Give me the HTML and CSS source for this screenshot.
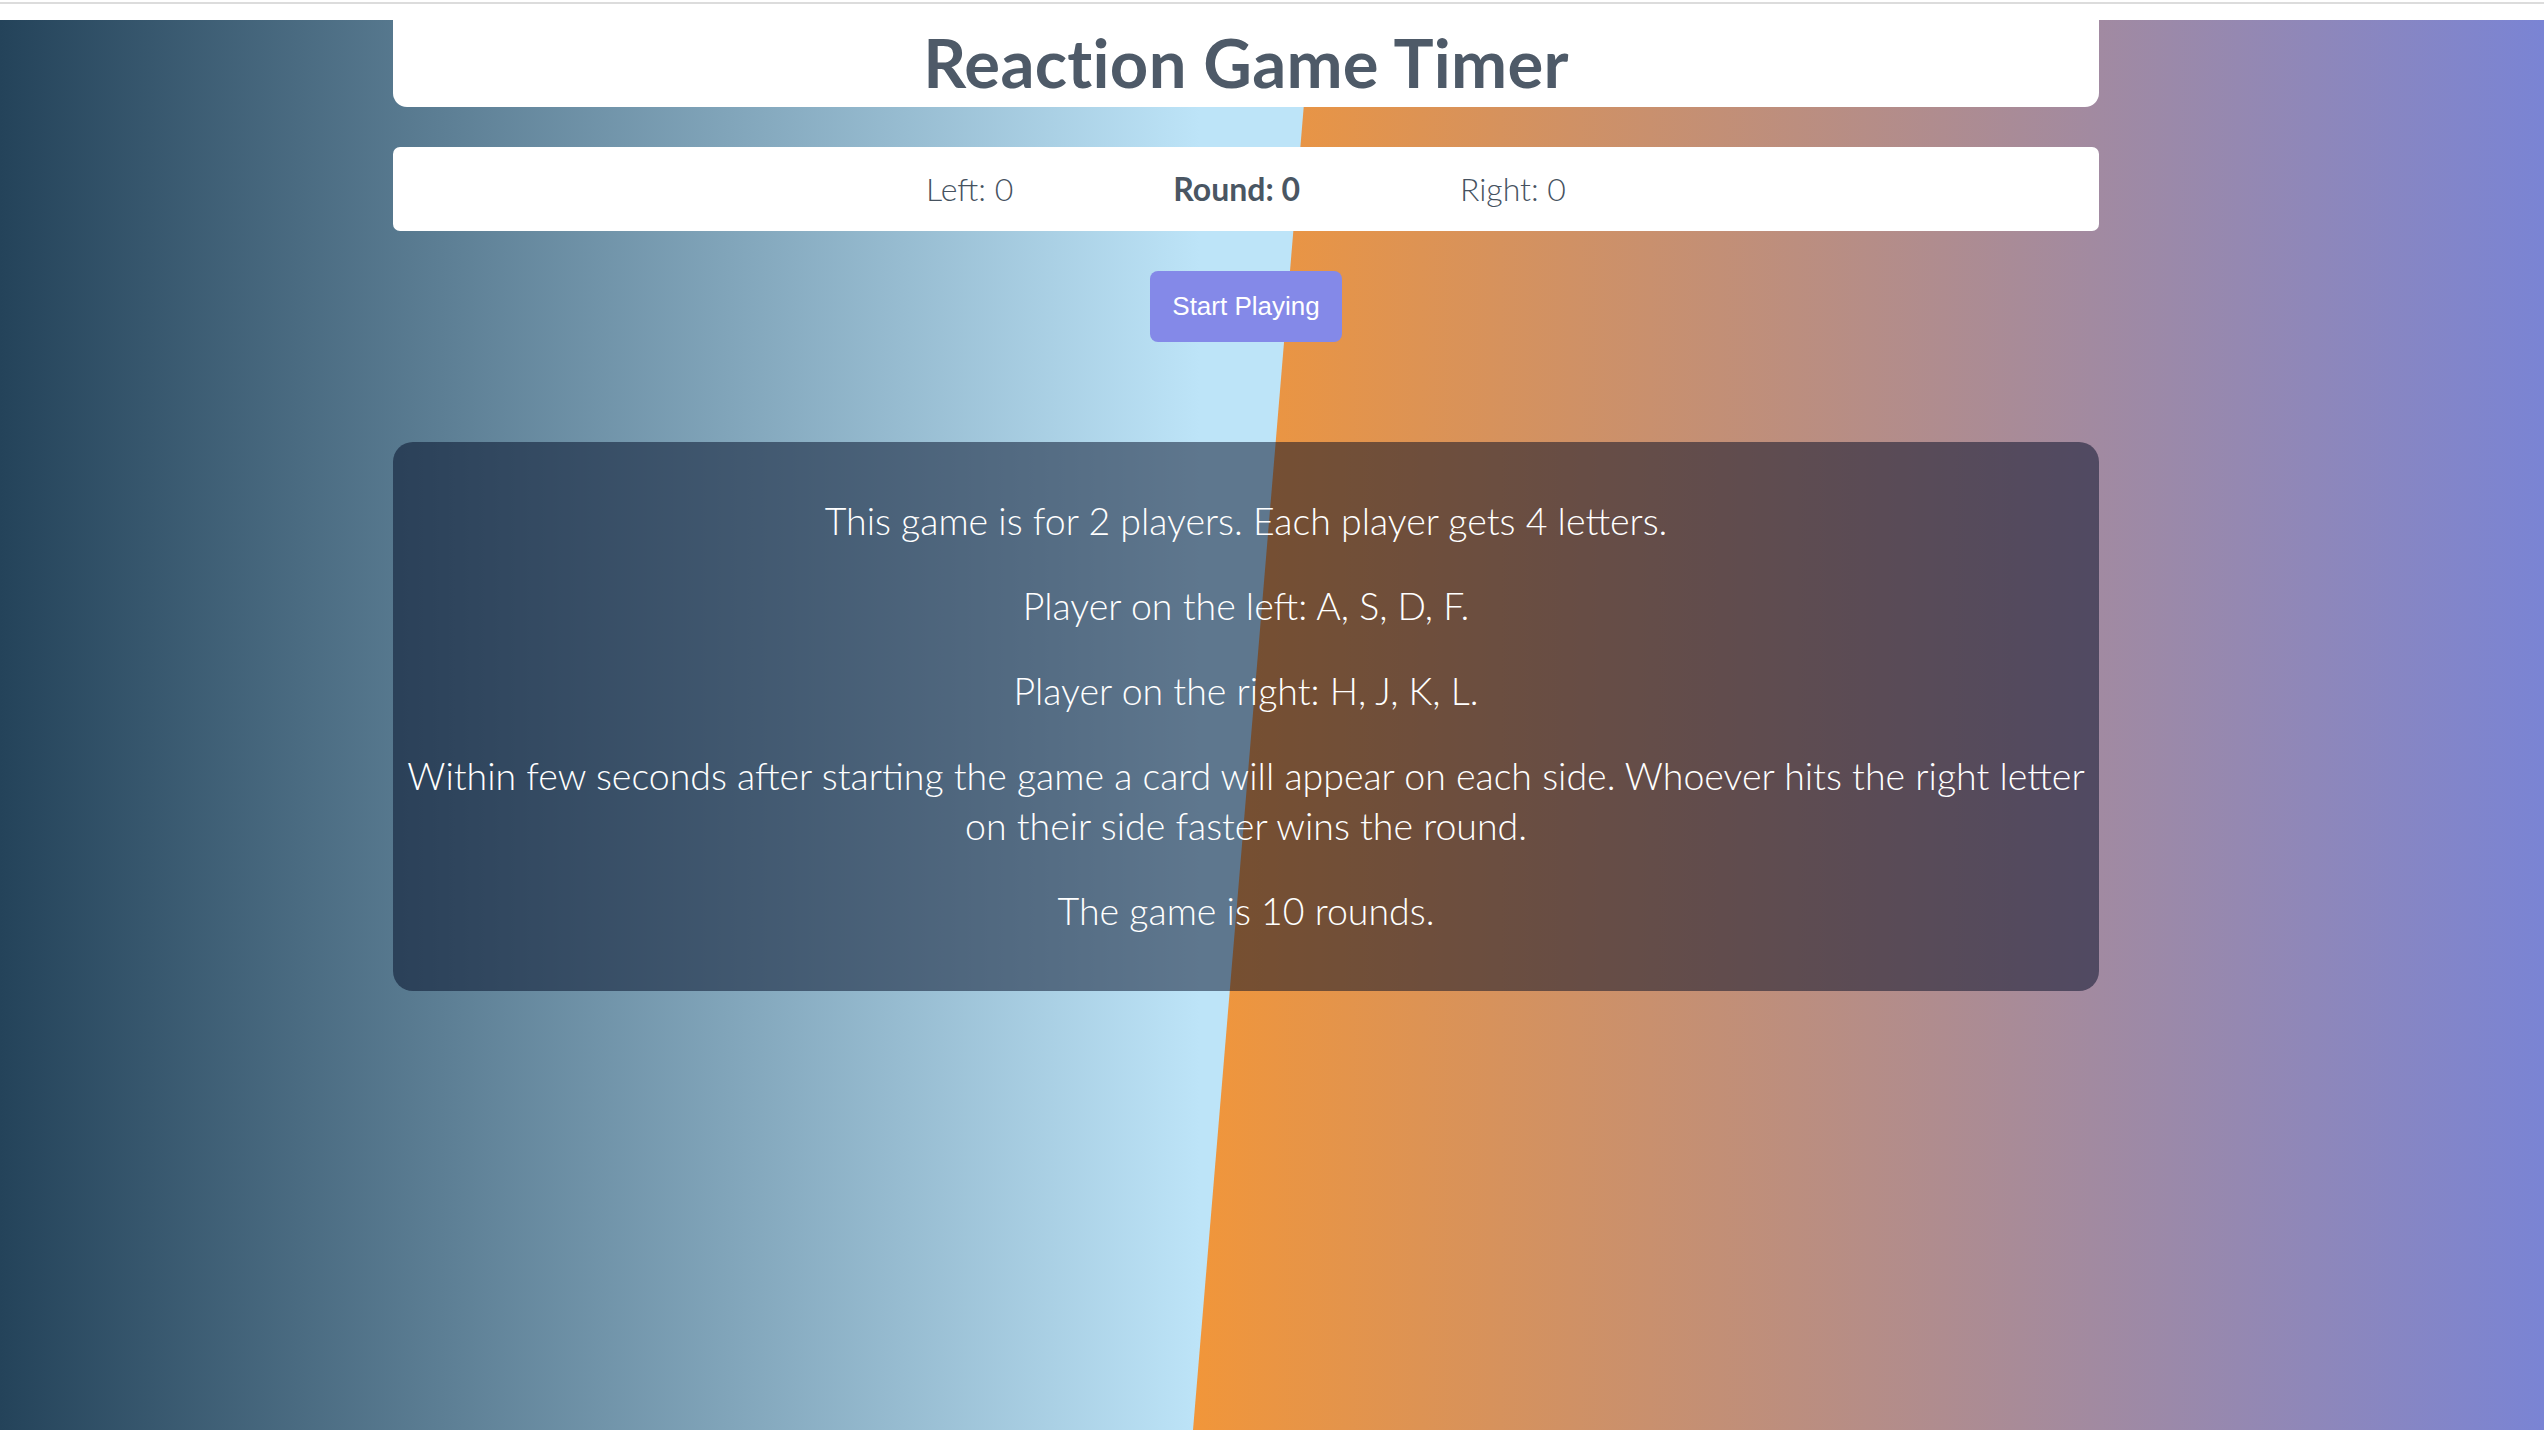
FILE: index.html
```html
<!DOCTYPE html>
<html lang="en">
<head>
<meta charset="utf-8">
<title>Reaction Game Timer</title>
<link rel="stylesheet" href="styles.css">
</head>
<body>
  <div class="topbar"></div>
  <main class="stage">
    <div class="container">
      <header class="title-card">
        <h1 class="title">Reaction Game Timer</h1>
      </header>
      <div class="scoreboard">
        <span class="score">Left: 0</span>
        <span class="score round">Round: 0</span>
        <span class="score">Right: 0</span>
      </div>
      <div class="actions">
        <button class="start-btn" type="button">Start Playing</button>
      </div>
      <section class="rules">
        <p>This game is for 2 players. Each player gets 4 letters.</p>
        <p>Player on the left: A, S, D, F.</p>
        <p>Player on the right: H, J, K, L.</p>
        <p>Within few seconds after starting the game a card will appear on each side. Whoever hits the right letter on their side faster wins the round.</p>
        <p>The game is 10 rounds.</p>
      </section>
    </div>
  </main>
</body>
</html>
```

FILE: styles.css
```css
html, body {
  margin: 0;
  padding: 0;
}

body {
  background: #ffffff;
  font-family: "Lato", "Noto Sans", sans-serif;
  overflow: hidden;
}

.topbar {
  height: 20px;
  box-sizing: border-box;
  border-top: 2px solid #ffffff;
  background: linear-gradient(#dcdcdc 0, #dcdcdc 2px, #ffffff 2px);
}

.stage {
  position: relative;
  height: 1410px;
  background: linear-gradient(to right, #24435a 0, #bde4f8 1200px, #bde4f8 100%);
}

.stage::before {
  content: "";
  position: absolute;
  inset: 0;
  background: linear-gradient(to right, #f1963a 1195px, #7a84d4 100%);
  clip-path: polygon(1311px 0, 100% 0, 100% 100%, 1193px 100%);
}

.container {
  position: relative;
  z-index: 1;
  width: 1706px;
  margin-left: 393px;
  display: flex;
  flex-direction: column;
}

.title-card {
  background: #ffffff;
  height: 87px;
  border-radius: 0 0 14px 14px;
  display: flex;
  justify-content: center;
}

.title {
  margin: 0;
  padding-top: 9px;
  font-size: 67px;
  line-height: 67px;
  font-weight: 700;
  color: #4e5a68;
  letter-spacing: 0.3px;
}

.scoreboard {
  margin-top: 40px;
  height: 84px;
  background: #ffffff;
  border-radius: 7px;
  display: flex;
  justify-content: center;
  align-items: center;
  gap: 160px;
}

.score {
  font-size: 32px;
  line-height: 84px;
  font-weight: 300;
  color: #46525f;
}

.score.round {
  font-weight: 700;
  color: #4a5663;
}

.actions {
  margin-top: 40px;
  display: flex;
  justify-content: center;
}

.start-btn {
  width: 192px;
  height: 71px;
  border: none;
  border-radius: 8px;
  background: #8489e8;
  color: #ffffff;
  font-family: "Liberation Sans", Arial, sans-serif;
  font-size: 26px;
  padding: 0;
  cursor: pointer;
}

.rules {
  margin-top: 100px;
  background: rgba(0, 10, 35, 0.5);
  border-radius: 20px;
  padding: 19px 8px 20px;
  color: #ffffff;
  text-align: center;
  font-size: 37.5px;
  line-height: 50px;
  font-weight: 300;
}

.rules p {
  margin: 35px 0;
}
```
